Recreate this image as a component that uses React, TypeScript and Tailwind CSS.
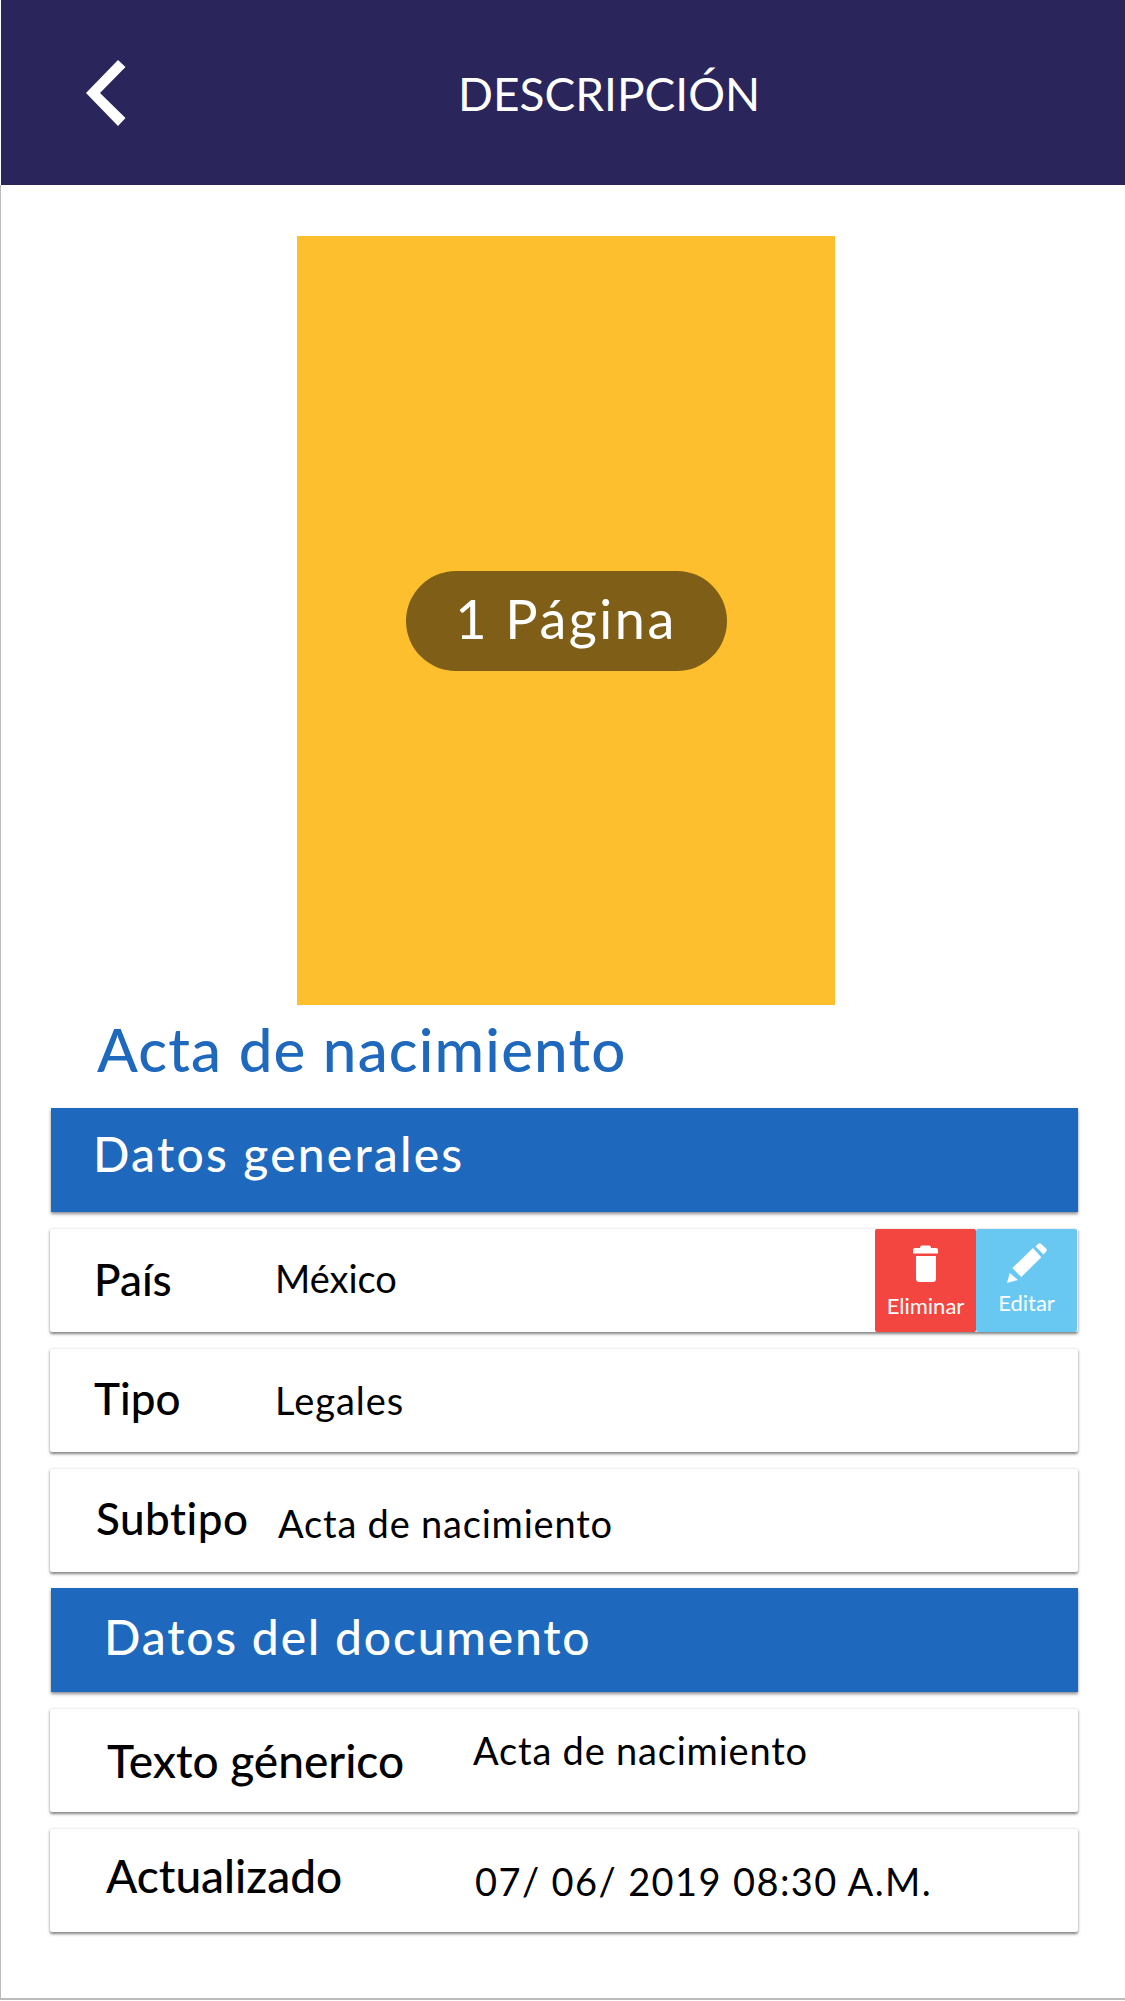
import type { ReactNode } from "react";

function TrashIcon() {
    return (
        <svg width="25" height="37" viewBox="0 0 25 37" fill="white">
            <path d="M7 3.5 C7 1 8 0.5 9.5 0.5 H15.5 C17 0.5 18 1 18 3.5 Z" />
            <path d="M2 3 H23 C24.5 3 25 4 25 5 V8.5 H0 V5 C0 4 0.5 3 2 3 Z" />
            <path d="M3 11 H23 V33.5 C23 35.5 22 37 20 37 H6 C4 37 3 35.5 3 33.5 Z" />
        </svg>
    );
}

function PenIcon() {
    return (
        <svg width="40" height="40" viewBox="0 0 40 40" fill="white">
            <path d="M0 40 L2.7 30 L11 37 Z" />
            <path d="M5.3 25 L26 5 L34.3 14.3 L14.3 34 Z" />
            <path d="M28.5 3.5 L31 1 C32 0 33 0 34 0.8 L39 5.5 C40 6.5 40 7.5 39.2 8.5 L36.5 11.5 Z" />
        </svg>
    );
}

function SectionBar({ children, className }: { children: ReactNode; className: string }) {
    return (
        <div className={`h-[104px] ml-px bg-[#1e68bd] shadow-[0_2px_3px_rgba(0,0,0,0.45)] text-white text-[48px] font-medium ${className}`}>
            {children}
        </div>
    );
}

function Row({ label, value, labelClass, valueClass, children }: {
    label: string;
    value: string;
    labelClass: string;
    valueClass: string;
    children?: ReactNode;
}) {
    return (
        <div className="h-[104px] pr-px flex items-stretch rounded-[2px] bg-white border-t border-[#f0f0f0] shadow-[0_2px_3px_rgba(0,0,0,0.5)] text-black">
            <div className={`shrink-0 flex items-center font-medium ${labelClass}`}>{label}</div>
            <div className={`flex items-center text-[38px] ${valueClass}`}>{value}</div>
            {children}
        </div>
    );
}

export default function App() {
    return (
        <div className="w-[1125px] h-[2001px] bg-white pl-px [font-family:Lato,sans-serif]">
            <header className="h-[185px] bg-[#2a255b] flex items-center relative">
                <svg className="ml-[85px]" width="40" height="66" viewBox="0 0 40 66" fill="white">
                    <path d="M32 0 L39.5 7 L14 33 L39.5 58 L32 66 L0 33 Z" />
                </svg>
                <h1 className="absolute left-[457px] top-[70px] text-[46px] leading-[48px] text-white">DESCRIPCIÓN</h1>
            </header>

            <div className="h-[1815px] border-l border-b-2 border-[#bbbbbb] -ml-px flex flex-col">
                <div className="mt-[51px] ml-[296px] w-[538px] h-[769px] bg-[#fdbf2d] flex items-center justify-center">
                    <div className="w-[321px] h-[100px] pb-[5px] rounded-full bg-[#7f5f17] flex items-center justify-center text-white text-[54px] tracking-[2.5px]">
                        1 Página
                    </div>
                </div>

                <h2 className="h-[103px] ml-[96px] pb-[16px] flex items-center text-[60px] font-medium tracking-[1.2px] text-[#1e68bd]">Acta de nacimiento</h2>

                <div className="w-[1028px] ml-[49px] flex flex-col gap-4">
                    <SectionBar className="flex items-center pl-[42px] pb-[12px] tracking-[2.2px]">Datos generales</SectionBar>

                    <Row label="País" value="México" labelClass="w-[225px] pl-[44px] pb-[4px] text-[44px]" valueClass="pb-[4px] flex-1">
                        <div className="flex">
                            <div className="w-[101px] rounded-[2px] bg-[#f44640] text-white flex flex-col items-center pt-4 text-[22px] leading-6">
                                <TrashIcon />
                                <span className="mt-[12px]">Eliminar</span>
                            </div>
                            <div className="w-[101px] rounded-[2px] bg-[#68c8f2] text-white flex flex-col items-center pt-[14px] text-[22px] leading-6">
                                <PenIcon />
                                <span className="mt-[8px]">Editar</span>
                            </div>
                        </div>
                    </Row>
                    <Row label="Tipo" value="Legales" labelClass="w-[225px] pl-[44px] pb-[6px] text-[44px]" valueClass="pb-[1px] tracking-[1px]" />
                    <Row label="Subtipo" value="Acta de nacimiento" labelClass="w-[228px] pl-[46px] pb-[6px] text-[44px] tracking-[0.5px]" valueClass="pt-[5px] tracking-[0.8px]" />

                    <SectionBar className="flex items-center pl-[53px] pb-[6px] tracking-[1.8px]">Datos del documento</SectionBar>

                    <Row label="Texto génerico" value="Acta de nacimiento" labelClass="w-[423px] pl-[57px] text-[46px]" valueClass="pb-[20px] tracking-[0.8px]" />
                    <Row label="Actualizado" value="07/ 06/ 2019 08:30 A.M." labelClass="w-[425px] pl-[56px] pb-[10px] text-[46px]" valueClass="pt-[1px] tracking-[1.4px]" />
                </div>
            </div>
        </div>
    );
}
